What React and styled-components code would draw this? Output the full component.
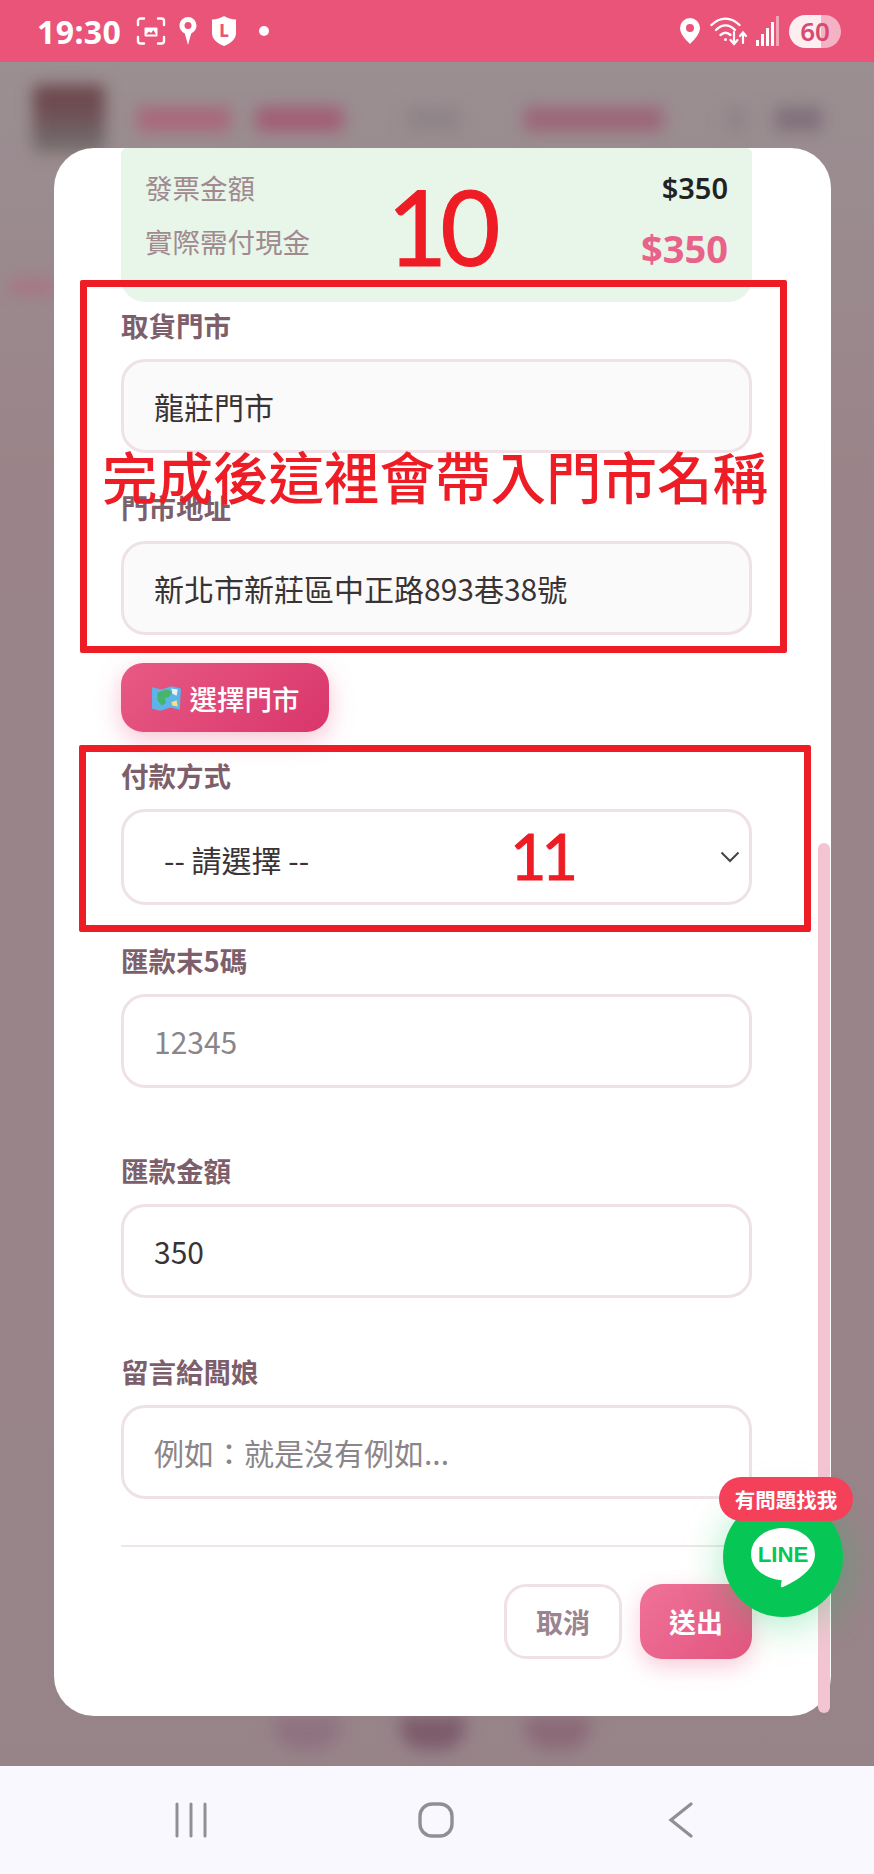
import React from "react";
import styled, { createGlobalStyle } from "styled-components";

const GlobalStyle = createGlobalStyle`
  html, body {
    margin: 0;
    padding: 0;
    background: #978689;
  }
  * {
    box-sizing: border-box;
  }
  body {
    font-family: "Noto Sans CJK TC", sans-serif;
  }
`;

const FONT = `"Noto Sans", "Noto Sans CJK TC", sans-serif`;
const CJK = `"Noto Sans CJK TC", "Noto Sans", sans-serif`;

export default function App() {
  return (
    <Screen>
      <GlobalStyle />
      <StatusBar>
        <StatusLeft>
          <Clock>19:30</Clock>
          <svg width="30" height="28" viewBox="0 0 30 28" fill="none" stroke="#fff" strokeWidth="2.4" strokeLinecap="round">
            <path d="M2 8V4a2.500 2.500 0 0 1 2.500-2.500H8M22 1.500h3.500A2.500 2.500 0 0 1 28 4v4M28 20v4a2.500 2.500 0 0 1-2.500 2.500H22M8 26.500H4.500A2.500 2.500 0 0 1 2 24v-4" />
            <path d="M8.500 18.500v-7a1 1 0 0 1 1-1h11a1 1 0 0 1 1 1v7a1 1 0 0 1-1 1h-11a1 1 0 0 1-1-1Z" fill="#fff" stroke="none" />
            <path d="M10 17.500l3-3 2 1.500 2.500-3 2.500 4.500Z" fill="#ea5479" stroke="none" />
          </svg>
          <svg width="20" height="30" viewBox="0 0 20 30">
            <path fillRule="evenodd" fill="#fff" d="M10 1a8.500 8.500 0 0 1 8.500 8.500c0 3.600-2.200 6.600-5.300 7.900L10 29l-3.200-11.600A8.500 8.500 0 0 1 10 1Zm0 5a3.500 3.500 0 1 0 0 7 3.500 3.500 0 0 0 0-7Z" />
          </svg>
          <svg width="28" height="32" viewBox="0 0 28 32">
            <path fill="#fff" d="M2 4.500C7 4.500 10 3 14 1c4 2 7 3.500 12 3.500V18c0 6-5 10.500-12 13C7 28.500 2 24 2 18Z" />
            <text x="14" y="22" textAnchor="middle" fontSize="17" fontWeight="800" fill="#ea5479" fontFamily={FONT}>L</text>
          </svg>
          <StatusDot />
        </StatusLeft>
        <StatusRight>
          <svg width="20" height="26" viewBox="0 0 20 26">
            <path fillRule="evenodd" fill="#fff" d="M10 0a10 10 0 0 1 10 10c0 5.500-5 11-10 16C5 21 0 15.500 0 10A10 10 0 0 1 10 0Zm0 6a4 4 0 1 0 0 8 4 4 0 0 0 0-8Z" />
          </svg>
          <svg width="38" height="32" viewBox="0 0 38 32" fill="none" stroke="#fff" strokeLinecap="round" strokeWidth="2.400">
            <path d="M1.500 10C10 1.500 21 1.500 29.500 10" />
            <path d="M6 15c6-6 13-6 19 0" />
            <path d="M10.500 20c3.500-3.200 6.500-3.200 10 0" />
            <circle cx="15.500" cy="24.500" r="1.500" fill="#fff" stroke="none" />
            <path d="M24 17v11M20.500 25l3.500 4 3.500-4" strokeWidth="2.200" />
            <path d="M33 28V18M30 21l3-3.500 3 3.500" strokeWidth="2.200" />
          </svg>
          <SignalBars>
            <SignalBar $h={6} />
            <SignalBar $h={12} />
            <SignalBar $h={18} />
            <SignalBar $h={24} />
            <SignalBar $h={30} $dim />
          </SignalBars>
          <Battery>60</Battery>
        </StatusRight>
      </StatusBar>

      <Backdrop>
        <BlurTop>
          <BlurHeader>
            <BlurLogo />
            <BlurBar $w={94} $color="#a9677c" />
            <BlurBar $w={87} $color="#a25c74" $ml={25} />
            <BlurBar $w={53} $color="#8f8488" $ml={64} />
            <BlurBar $w={139} $color="#9c6578" $ml={64} />
            <BlurBar $w={22} $color="#8f8488" $ml={62} />
            <BlurBar $w={47} $color="#80707a" $ml={28} />
          </BlurHeader>
          <BlurTab />
        </BlurTop>
        <BlurFooter>
          <BlurBlob $color="#8f7280" />
          <BlurBlob $color="#7d5c6c" />
          <BlurBlob $color="#8b6a78" />
        </BlurFooter>

        <Modal>
          <SummaryBox>
            <SummaryRow>
              <SummaryLabel>發票金額</SummaryLabel>
              <SummaryValue>$350</SummaryValue>
            </SummaryRow>
            <SummaryRow>
              <SummaryLabel>實際需付現金</SummaryLabel>
              <SummaryTotal>$350</SummaryTotal>
            </SummaryRow>
          </SummaryBox>

          <Field $top={5}>
            <Label>取貨門市</Label>
            <TextInput $readOnly readOnly value="龍莊門市" />
          </Field>
          <Field $top={36}>
            <Label>門市地址</Label>
            <TextInput $readOnly readOnly value="新北市新莊區中正路893巷38號" />
          </Field>

          <PickStoreButton>
            <svg width="31" height="28" viewBox="0 0 29 26">
              <path fill="#5db4e8" d="M1 3l9 2 9-3 9 2-1 20-9-2-9 3-8-2Z" />
              <path fill="#46b56b" d="M6 8l8-3 6 2-3 5-4 1 1 5-4 2-4-5Z" />
              <path fill="#e8f3f8" d="M19 4l6 1-1 6-4-2Z" />
              <path fill="#f3e08a" d="M19 17l5-2 1 6-5-1Z" />
            </svg>
            選擇門市
          </PickStoreButton>

          <Field $top={25}>
            <Label>付款方式</Label>
            <SelectBox>
              <span>-- 請選擇 --</span>
              <svg width="20" height="12" viewBox="0 0 20 12" fill="none" stroke="#444" strokeWidth="2">
                <path d="M1.500 1.500L10 10l8.500-8.500" />
              </svg>
            </SelectBox>
          </Field>
          <Field $top={37}>
            <Label>匯款末5碼</Label>
            <TextInput readOnly placeholder="12345" />
          </Field>
          <Field $top={64}>
            <Label>匯款金額</Label>
            <TextInput readOnly value="350" />
          </Field>
          <Field $top={55}>
            <Label>留言給闆娘</Label>
            <TextInput readOnly placeholder="例如：就是沒有例如..." />
          </Field>

          <Divider />
          <Actions>
            <CancelButton>取消</CancelButton>
            <SubmitButton>送出</SubmitButton>
          </Actions>

          <ScrollThumb />
        </Modal>

        <LineWidget>
          <LineBadge>有問題找我</LineBadge>
          <LineCircle>
            <svg width="66" height="62" viewBox="0 0 68 64">
              <path fill="#fff" d="M34 1c18.500 0 33 11.800 33 27 0 14-14 25-33 34-1.500.8-2.500-.3-2.200-2l.9-5C14 53 1 42 1 28 1 12.800 15.500 1 34 1Z" />
              <text x="34" y="36" textAnchor="middle" fontSize="23" fontWeight="700" fill="#06c755" fontFamily="Liberation Sans, sans-serif">LINE</text>
            </svg>
          </LineCircle>
        </LineWidget>

        <BigNumber $left={387} $top={112} $size={104} $track={-7}>10</BigNumber>
        <BigNumber $left={510} $top={762} $size={63} $track={-5}>11</BigNumber>
        <RedFrame $left={80} $top={218} $w={707} $h={373} />
        <RedFrame $left={79} $top={683} $w={732} $h={187} />
        <Caption>完成後這裡會帶入門市名稱</Caption>
      </Backdrop>

      <NavBar>
        <svg width="34" height="36" viewBox="0 0 34 36" fill="none" stroke="#8f8f96" strokeWidth="3" strokeLinecap="round">
          <path d="M3 2v32M17 2v32M31 2v32" />
        </svg>
        <svg width="36" height="36" viewBox="0 0 36 36" fill="none" stroke="#8f8f96" strokeWidth="3.400">
          <rect x="2" y="2" width="32" height="32" rx="12" />
        </svg>
        <NavBack width="26" height="36" viewBox="0 0 26 36" fill="none" stroke="#8f8f96" strokeWidth="3.200" strokeLinecap="round">
          <path d="M23 2L3 18l20 16" />
        </NavBack>
      </NavBar>
    </Screen>
  );
}

const Screen = styled.div`
  position: relative;
  width: 874px;
  height: 1874px;
  display: flex;
  flex-direction: column;
  overflow: hidden;
  font-family: ${CJK};
`;

const StatusBar = styled.div`
  height: 62px;
  flex: none;
  display: flex;
  align-items: center;
  justify-content: space-between;
  padding: 0 33px 0 37px;
  background: #ea5479;
  color: #fff;
  font-family: ${FONT};
`;

const StatusLeft = styled.div`
  display: flex;
  align-items: center;
  gap: 12px;
`;

const Clock = styled.div`
  margin-right: 3px;
  font-size: 32px;
  font-weight: 700;
  letter-spacing: 0.4px;
`;

const StatusDot = styled.div`
  width: 10px;
  height: 10px;
  margin-left: 9px;
  border-radius: 50%;
  background: #fff;
`;

const StatusRight = styled.div`
  display: flex;
  align-items: center;
  gap: 10px;
`;

const SignalBars = styled.div`
  display: flex;
  align-items: flex-end;
  gap: 2px;
  height: 30px;
  margin-left: -2px;
  margin-right: -2px;
`;

const SignalBar = styled.div`
  width: 3px;
  height: ${(p) => p.$h}px;
  background: #fff;
  opacity: ${(p) => (p.$dim ? 0.45 : 1)};
`;

const Battery = styled.div`
  width: 52px;
  height: 33px;
  margin-left: 2px;
  display: flex;
  align-items: center;
  justify-content: center;
  border-radius: 17px;
  background: linear-gradient(90deg, #fdeef2 0 62%, #f6b2c5 62% 100%);
  color: #d94a70;
  font-size: 26px;
  font-weight: 600;
`;

const Backdrop = styled.div`
  position: relative;
  flex: 1;
  display: flex;
  flex-direction: column;
  justify-content: space-between;
  background: linear-gradient(180deg, #9a8f92 0%, #9a8489 25%, #978489 100%);
`;

const BlurTop = styled.div`
  filter: blur(8px);
`;

const BlurHeader = styled.div`
  display: flex;
  align-items: center;
  height: 114px;
  padding: 0 0 0 33px;
`;

const BlurLogo = styled.div`
  width: 72px;
  height: 68px;
  margin-right: 32px;
  border-radius: 6px;
  background: linear-gradient(180deg, #6b4347 0%, #70545a 50%, #6f686c 80%, #7e7068 100%);
`;

const BlurBar = styled.div`
  width: ${(p) => p.$w}px;
  height: 24px;
  margin-left: ${(p) => p.$ml || 0}px;
  background: ${(p) => p.$color};
`;

const BlurTab = styled.div`
  width: 44px;
  height: 10px;
  margin: 106px 0 0 10px;
  background: #b06a80;
`;

const BlurFooter = styled.div`
  display: flex;
  justify-content: center;
  gap: 60px;
  height: 50px;
  padding-right: 10px;
  filter: blur(8px);
`;

const BlurBlob = styled.div`
  width: 65px;
  height: 34px;
  border-radius: 0 0 24px 24px;
  background: ${(p) => p.$color};
`;

const Modal = styled.div`
  position: absolute;
  top: 86px;
  left: 54px;
  width: 777px;
  height: 1568px;
  display: flex;
  flex-direction: column;
  padding: 0 79px 0 67px;
  background: #fff;
  border-radius: 40px;
`;

const SummaryBox = styled.div`
  height: 154px;
  flex: none;
  display: flex;
  flex-direction: column;
  gap: 10px;
  padding: 17px 24px 0;
  background: #e8f5e9;
  border-radius: 6px 6px 24px 24px;
`;

const SummaryRow = styled.div`
  display: flex;
  justify-content: space-between;
  align-items: center;
  height: 44px;
`;

const SummaryLabel = styled.div`
  font-size: 27.5px;
  color: #a08a90;
`;

const SummaryValue = styled.div`
  font-family: ${FONT};
  font-size: 29px;
  font-weight: 600;
  color: #222;
`;

const SummaryTotal = styled.div`
  font-family: ${FONT};
  font-size: 38px;
  font-weight: 700;
  color: #e8628a;
  margin-top: 14px;
`;

const Field = styled.div`
  display: flex;
  flex-direction: column;
  flex: none;
  margin-top: ${(p) => p.$top}px;
`;

const Label = styled.label`
  height: 36px;
  margin-bottom: 16px;
  font-size: 27.5px;
  line-height: 36px;
  font-weight: 700;
  color: #7d5f6c;
`;

const TextInput = styled.input`
  width: 100%;
  height: 94px;
  padding: 0 30px;
  border: 3px solid #efe2e6;
  border-radius: 24px;
  outline: none;
  background: ${(p) => (p.$readOnly ? "#fafafa" : "#fff")};
  color: #3a3336;
  font-family: ${CJK};
  font-size: 30px;
  &::placeholder {
    color: #8b8589;
    opacity: 1;
  }
`;

const SelectBox = styled.div`
  height: 96px;
  display: flex;
  align-items: center;
  justify-content: space-between;
  padding: 0 9px 0 40px;
  border: 3px solid #efe2e6;
  border-radius: 24px;
  background: #fff;
  color: #3a3336;
  font-size: 30px;
  span {
    padding-top: 3px;
  }
`;

const PickStoreButton = styled.div`
  flex: none;
  align-self: flex-start;
  width: 208px;
  height: 69px;
  margin-top: 28px;
  display: flex;
  align-items: center;
  justify-content: center;
  gap: 8px;
  border-radius: 22px;
  background: linear-gradient(135deg, #e85a84 0%, #d9366c 100%);
  box-shadow: 0 8px 24px rgba(232, 90, 132, 0.35);
  color: #fff;
  font-size: 27.5px;
  font-weight: 500;
`;

const Divider = styled.div`
  flex: none;
  height: 2px;
  margin-top: 46px;
  background: #efe6e9;
`;

const Actions = styled.div`
  display: flex;
  justify-content: flex-end;
  gap: 18px;
  margin-top: 37px;
`;

const CancelButton = styled.div`
  width: 118px;
  height: 75px;
  display: flex;
  align-items: center;
  justify-content: center;
  border: 3px solid #efe2e6;
  border-radius: 22px;
  background: #fff;
  color: #9a8490;
  font-size: 27px;
  font-weight: 700;
`;

const SubmitButton = styled.div`
  width: 112px;
  height: 75px;
  display: flex;
  align-items: center;
  justify-content: center;
  border-radius: 22px;
  background: linear-gradient(135deg, #f07299 0%, #e2557f 100%);
  box-shadow: 0 8px 22px rgba(232, 90, 132, 0.3);
  color: #fff;
  font-size: 27px;
  font-weight: 700;
`;

const ScrollThumb = styled.div`
  position: absolute;
  top: 695px;
  right: 1px;
  width: 12px;
  height: 870px;
  border-radius: 6px;
  background: #f3c5d3;
`;

const LineWidget = styled.div`
  position: absolute;
  top: 1415px;
  left: 719px;
  width: 134px;
  display: flex;
  flex-direction: column;
  align-items: center;
`;

const LineBadge = styled.div`
  position: relative;
  z-index: 1;
  width: 134px;
  height: 44px;
  display: flex;
  align-items: center;
  justify-content: center;
  border-radius: 22px;
  background: #f5405a;
  color: #fff;
  font-size: 20.5px;
  font-weight: 700;
`;

const LineCircle = styled.div`
  width: 120px;
  height: 120px;
  margin: -24px 0 0 -6px;
  display: flex;
  align-items: center;
  justify-content: center;
  padding-top: 2px;
  border-radius: 50%;
  background: #06c755;
  box-shadow: 0 6px 40px rgba(6, 199, 85, 0.35);
`;

const BigNumber = styled.div`
  position: absolute;
  left: ${(p) => p.$left}px;
  top: ${(p) => p.$top}px;
  color: #ee1c25;
  font-family: Lato, sans-serif;
  font-size: ${(p) => p.$size}px;
  letter-spacing: ${(p) => p.$track}px;
  line-height: 1;
  -webkit-text-stroke: 1px #ee1c25;
`;

const RedFrame = styled.div`
  position: absolute;
  left: ${(p) => p.$left}px;
  top: ${(p) => p.$top}px;
  width: ${(p) => p.$w}px;
  height: ${(p) => p.$h}px;
  border: 7px solid #ee1c25;
  border-radius: 2px;
`;

const Caption = styled.div`
  position: absolute;
  left: 102px;
  top: 379px;
  color: #ee1c25;
  font-size: 55.5px;
  font-weight: 500;
  line-height: 68px;
  white-space: nowrap;
`;

const NavBar = styled.div`
  height: 108px;
  flex: none;
  display: flex;
  align-items: center;
  justify-content: center;
  gap: 210px;
  padding-right: 7px;
  background: #f8f8fe;
`;

const NavBack = styled.svg`
  margin-left: 4px;
`;
